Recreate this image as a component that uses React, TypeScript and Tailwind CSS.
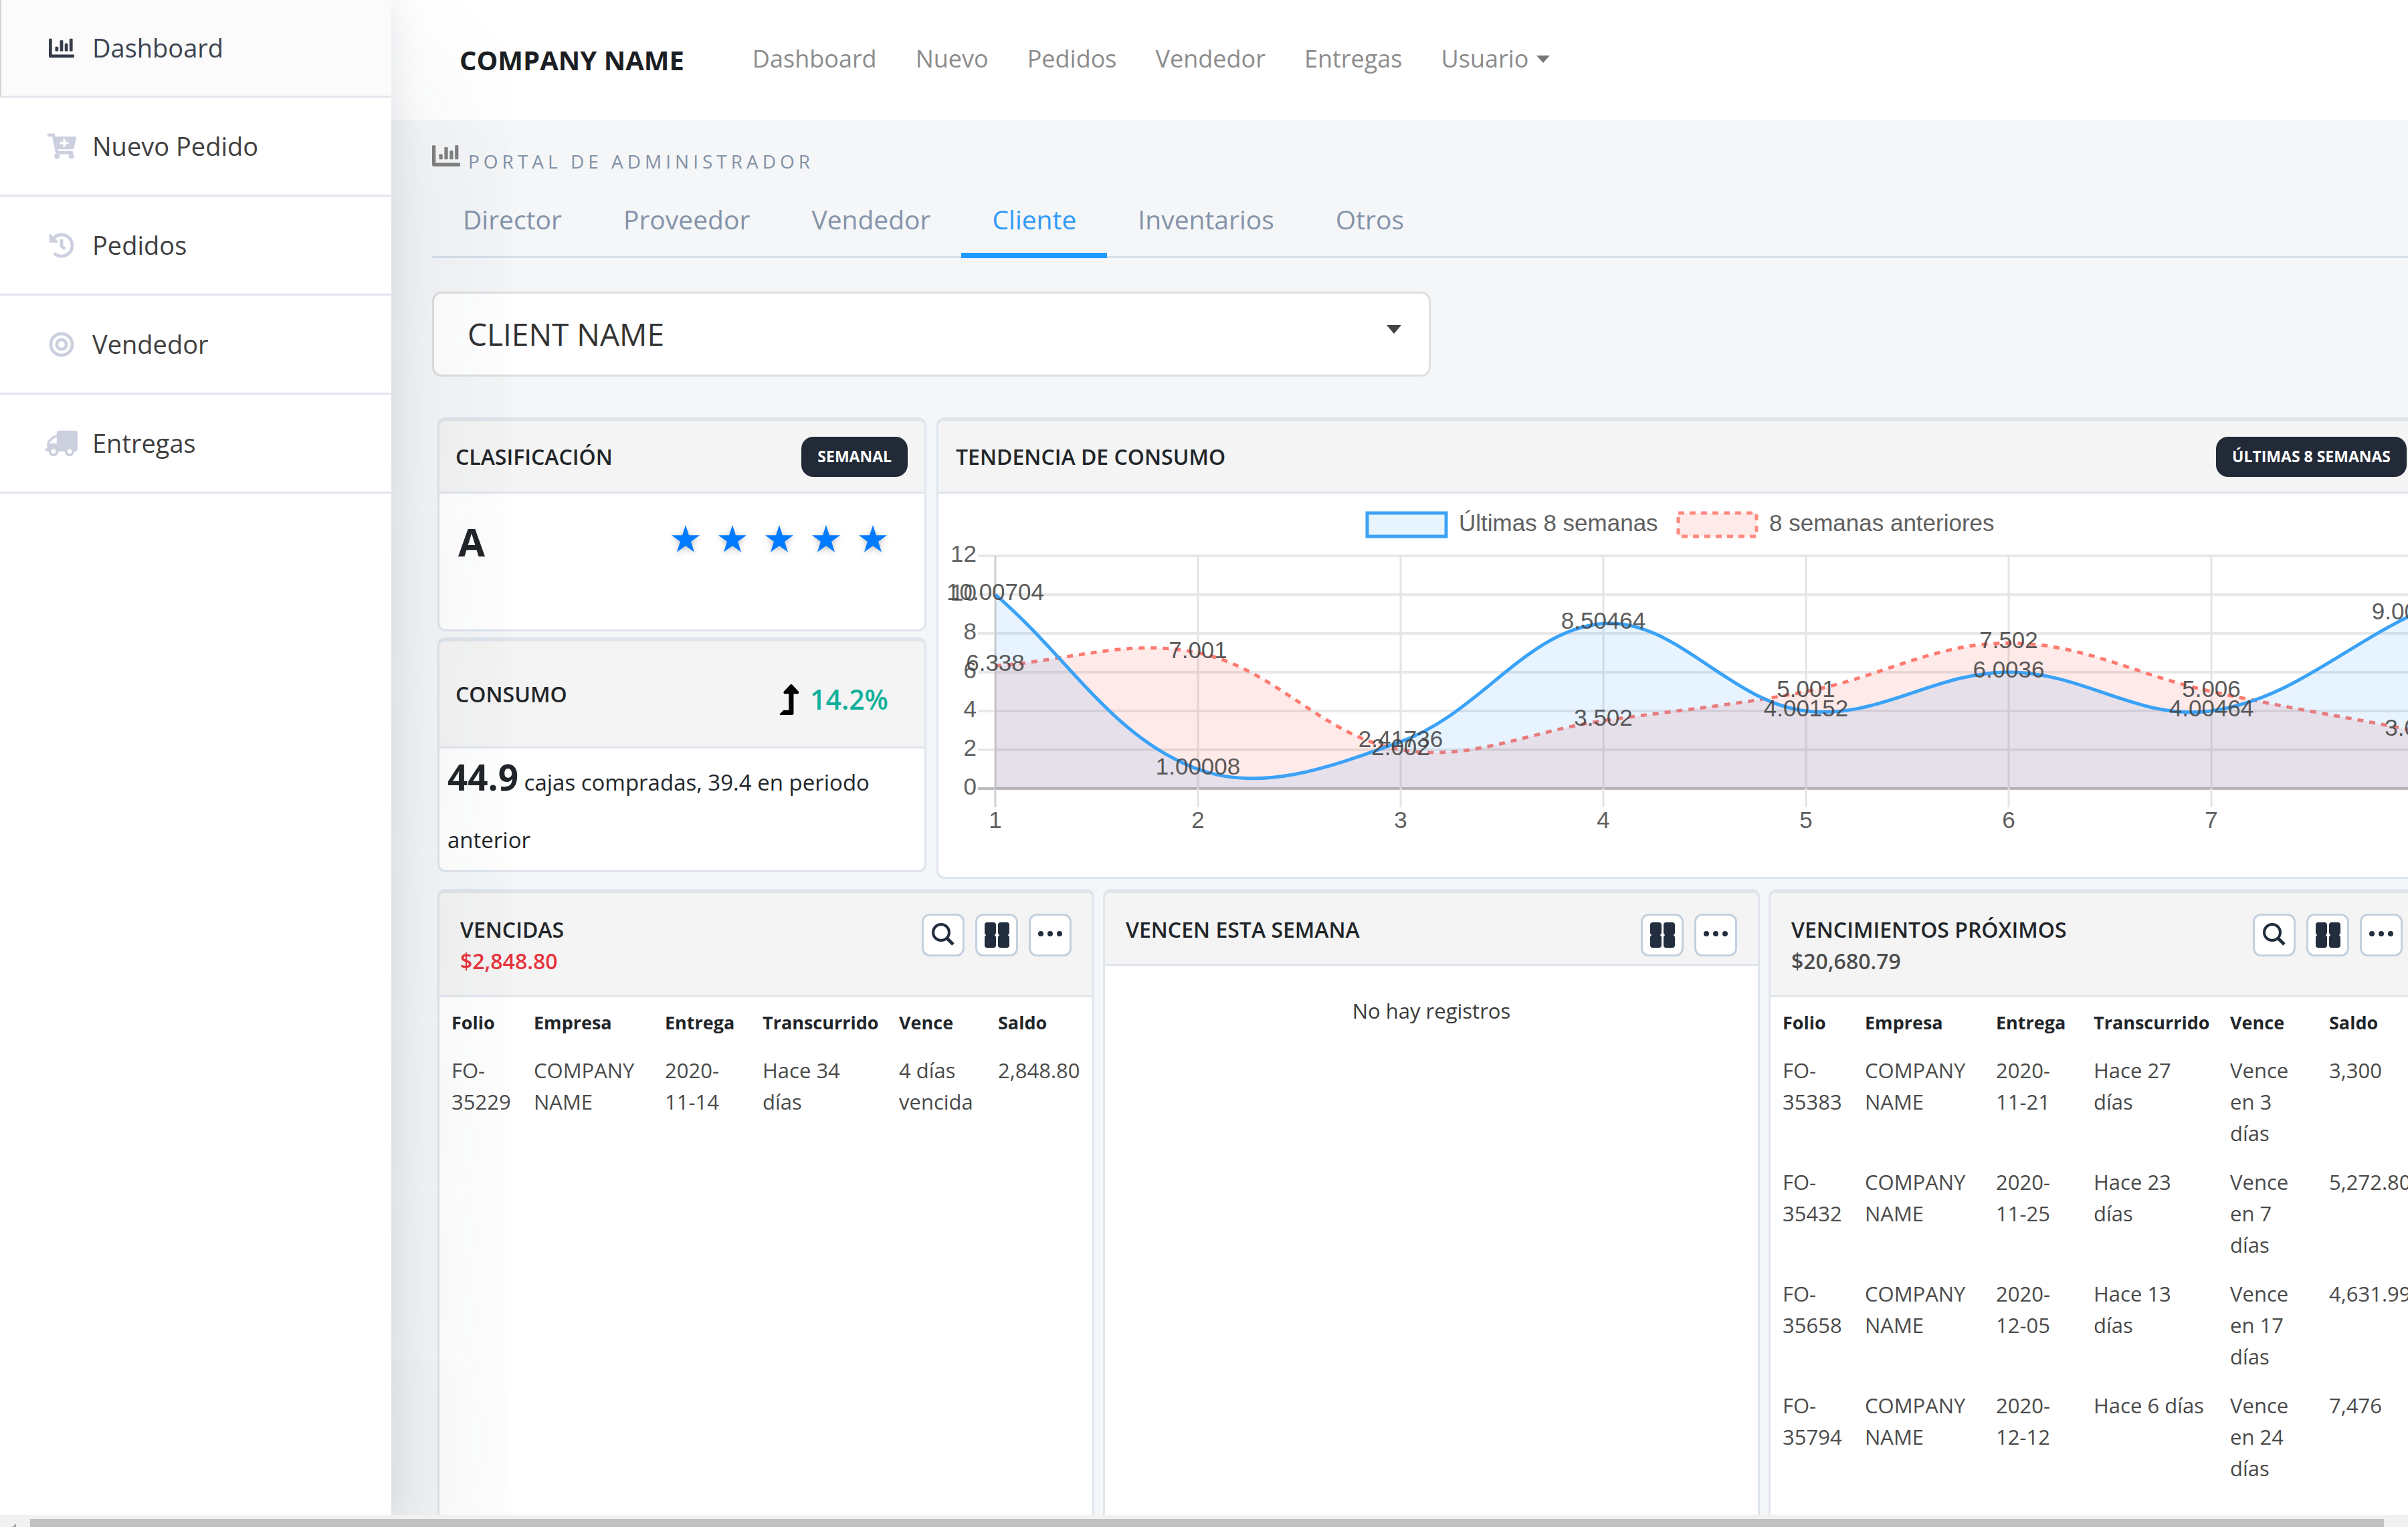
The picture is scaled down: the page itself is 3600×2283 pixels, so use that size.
import type { ReactNode } from "react";
import { FaBullseye, FaCartPlus, FaChartBar, FaHistory, FaLevelUpAlt, FaTruck } from "react-icons/fa";

const SIDE = [
  { label: "Dashboard", icon: <FaChartBar />, active: true },
  { label: "Nuevo Pedido", icon: <FaCartPlus className="size-[43px] shrink-0" /> },
  { label: "Pedidos", icon: <FaHistory /> },
  { label: "Vendedor", icon: <FaBullseye /> },
  { label: "Entregas", icon: <FaTruck className="size-12 shrink-0 -scale-x-100" /> },
];
const NAV = ["Dashboard", "Nuevo", "Pedidos", "Vendedor", "Entregas"];
const TABS = ["Director", "Proveedor", "Vendedor", "Cliente", "Inventarios", "Otros"];

type Row = { folio: string; date: string[]; ago: string; due: string; total: string };

const OVERDUE: Row[] = [
  { folio: "35229", date: ["2020-", "11-14"], ago: "Hace 34 días", due: "4 días vencida", total: "2,848.80" },
];
const UPCOMING: Row[] = [
  { folio: "35383", date: ["2020-", "11-21"], ago: "Hace 27 días", due: "Vence en 3 días", total: "3,300" },
  { folio: "35432", date: ["2020-", "11-25"], ago: "Hace 23 días", due: "Vence en 7 días", total: "5,272.80" },
  { folio: "35658", date: ["2020-", "12-05"], ago: "Hace 13 días", due: "Vence en 17 días", total: "4,631.99" },
  { folio: "35794", date: ["2020-", "12-12"], ago: "Hace 6 días", due: "Vence en 24 días", total: "7,476" },
];

const RECENT = ["10.00704", "1.00008", "2.41736", "8.50464", "4.00152", "6.0036", "4.00464", "9.00432"];
const PREVIOUS = ["6.338", "7.001", "2.002", "3.502", "5.001", "7.502", "5.006", "3.001"];

const X0 = 85;
const STEP = 303;
const BASE = 440;
const UNIT = 29;

type Pt = { x: number; y: number };

function points(values: string[]): Pt[] {
  return values.map((v, i) => ({ x: X0 + i * STEP, y: BASE - Number(v) * UNIT }));
}

// Smooth cubic path through the points
function curve(p: Pt[]): string {
  const t = 0.37;
  const ctrl = p.map((c, i) => {
    const a = p[i - 1] ?? c;
    const b = p[i + 1] ?? c;
    const d1 = Math.hypot(c.x - a.x, c.y - a.y);
    const d2 = Math.hypot(b.x - c.x, b.y - c.y);
    const f1 = (t * d1) / (d1 + d2);
    const f2 = (t * d2) / (d1 + d2);
    return {
      px: c.x - f1 * (b.x - a.x),
      py: c.y - f1 * (b.y - a.y),
      nx: c.x + f2 * (b.x - a.x),
      ny: c.y + f2 * (b.y - a.y),
    };
  });
  let d = `M${p[0].x},${p[0].y}`;
  for (let i = 1; i < p.length; i++) {
    d += ` C${ctrl[i - 1].nx},${ctrl[i - 1].ny} ${ctrl[i].px},${ctrl[i].py} ${p[i].x},${p[i].y}`;
  }
  return d;
}

function TrendChart() {
  const recent = points(RECENT);
  const previous = points(PREVIOUS);
  const end = X0 + 7 * STEP;
  const close = ` L${end},${BASE} L${X0},${BASE} Z`;
  return (
    <svg viewBox="0 0 2220 570" className="block w-full font-['Liberation_Sans',sans-serif] text-[35px]" role="img" aria-label="Tendencia de consumo">
      <rect x="641" y="28" width="118" height="35" fill="#e7f4fe" stroke="#3aa2f7" strokeWidth="5" />
      <text x="778" y="55" fill="#606060">Últimas 8 semanas</text>
      <rect x="1106" y="28" width="117" height="35" fill="#feeae9" stroke="#ff8a80" strokeWidth="5" strokeDasharray="9 8" />
      <text x="1242" y="55" fill="#606060">8 semanas anteriores</text>
      {[0, 2, 4, 6, 8, 10, 12].map((v) => (
        <g key={v}>
          <line x1="59" x2={end} y1={BASE - v * UNIT} y2={BASE - v * UNIT} stroke={v === 0 ? "#bdbdbd" : "#e8e8e8"} strokeWidth="4" />
          <text x="57" y={BASE - v * UNIT + 9} textAnchor="end" fill="#606060">{v}</text>
        </g>
      ))}
      {recent.map((p, i) => (
        <g key={i}>
          <line x1={p.x} x2={p.x} y1="92" y2="468" stroke={i === 0 ? "#d0d0d0" : "#e4e4e4"} strokeWidth="3" />
          <text x={p.x} y="499" textAnchor="middle" fill="#606060">{i + 1}</text>
        </g>
      ))}
      <path d={curve(previous) + close} fill="#f44336" fillOpacity="0.11" />
      <path d={curve(previous)} fill="none" stroke="#ff7a70" strokeWidth="5" strokeDasharray="9 9" />
      <path d={curve(recent) + close} fill="#2196f3" fillOpacity="0.11" />
      <path d={curve(recent)} fill="none" stroke="#3aa2f7" strokeWidth="5" />
      {recent.map((p, i) => (
        <text key={i} x={p.x} y={p.y + 8} textAnchor="middle" fill="#444" fillOpacity="0.9">{RECENT[i]}</text>
      ))}
      {previous.map((p, i) => (
        <text key={i} x={p.x} y={p.y + 8} textAnchor="middle" fill="#444" fillOpacity="0.9">{PREVIOUS[i]}</text>
      ))}
    </svg>
  );
}

function Card({ className = "", children }: { className?: string; children: ReactNode }) {
  return (
    <section className={`overflow-hidden rounded-[12px] border-[3px] border-t-[6px] border-[#dfe5eb] bg-white ${className}`}>
      {children}
    </section>
  );
}

function Badge({ children }: { children: ReactNode }) {
  return (
    <span className="flex h-[60px] items-center rounded-[18px] bg-[#222a37] px-6 text-[23px] font-bold text-white">{children}</span>
  );
}

function Tool({ label, children }: { label: string; children: ReactNode }) {
  return (
    <button type="button" aria-label={label} className="flex size-16 items-center justify-center rounded-[12px] border-[3px] border-[#c3d0de] bg-white text-[#222d3d]">
      {children}
    </button>
  );
}

function Tools({ search }: { search?: boolean }) {
  return (
    <div className="flex gap-4">
      {search && (
        <Tool label="Buscar">
          <svg viewBox="0 0 36 36" className="size-9" fill="none" stroke="currentColor" strokeWidth="4">
            <circle cx="15" cy="14" r="12" />
            <path d="M23.500 22.500 33 32" strokeWidth="5" />
          </svg>
        </Tool>
      )}
      <Tool label="Columnas">
        <svg viewBox="0 0 38 38" className="size-[38px]" fill="currentColor">
          <rect x="1" y="0" width="17" height="19" rx="4" />
          <rect x="21" y="0" width="17" height="19" rx="4" />
          <rect x="1" y="19" width="17" height="19" rx="4" />
          <rect x="21" y="19" width="17" height="19" rx="4" />
          <path d="M3 16h13v6H3zM23 16h13v6H23z" />
        </svg>
      </Tool>
      <Tool label="Más opciones">
        <svg viewBox="0 0 38 38" className="size-[38px]" fill="currentColor">
          <circle cx="5" cy="17" r="4" />
          <circle cx="19" cy="17" r="4" />
          <circle cx="33" cy="17" r="4" />
        </svg>
      </Tool>
    </div>
  );
}

function RecordTable({ rows }: { rows: Row[] }) {
  return (
    <table className="w-full table-fixed text-left text-[31px] leading-[47px] text-[#4a4a4a]">
      <colgroup>
        <col className="w-[141px]" />
        <col className="w-[196px]" />
        <col className="w-[146px]" />
        <col className="w-[204px]" />
        <col className="w-[148px]" />
        <col />
      </colgroup>
      <thead>
        <tr className="h-[75px] text-[27px] text-[#212529]">
          {["Folio", "Empresa", "Entrega", "Transcurrido", "Vence", "Saldo"].map((h) => (
            <th key={h} scope="col" className="font-bold first:pl-[18px]">{h}</th>
          ))}
        </tr>
      </thead>
      <tbody>
        {rows.map((r) => (
          <tr key={r.folio} className="align-top *:pt-[11px] *:pb-[15px]">
            <td className="pl-[18px]">FO-<br />{r.folio}</td>
            <td>COMPANY<br />NAME</td>
            <td>{r.date[0]}<br />{r.date[1]}</td>
            <td className="pr-7">{r.ago}</td>
            <td className="pr-8">{r.due}</td>
            <td>{r.total}</td>
          </tr>
        ))}
      </tbody>
    </table>
  );
}

function ListCard({ title, amount, amountClass = "", search, children }: { title: string; amount?: string; amountClass?: string; search?: boolean; children: ReactNode }) {
  return (
    <Card className="min-w-0 flex-1 rounded-b-none border-b-0">
      <header className={`flex items-start justify-between border-b-[3px] border-[#dfe5eb] bg-[#f4f4f4] px-[31px] pt-[31px] ${amount ? "h-[156px]" : "h-[109px]"}`}>
        <h2 className="text-[32px] leading-[47px] font-semibold text-[#212529]">
          {title}
          {amount && <span className={`block ${amountClass}`}>{amount}</span>}
        </h2>
        <Tools search={search} />
      </header>
      {children}
    </Card>
  );
}

export default function App() {
  return (
    <div className="flex h-screen flex-col overflow-hidden bg-[#f4f6f8] font-['Open_Sans','Noto_Sans',sans-serif] text-[#212529]">
      <div className="flex min-h-0 flex-1">
        <aside className="relative z-10 w-[585px] shrink-0 bg-white shadow-[0_0_50px_rgba(40,50,70,0.10),0_140px_360px_rgba(40,50,70,0.14)]">
          <nav aria-label="Lateral">
            {SIDE.map((s) => (
              <a
                key={s.label}
                href="#"
                className={`flex items-center gap-6 border-b-[3px] border-[#e1e6ec] text-[38px] ${s.active ? "h-[146px] border-l-2 border-l-[#d5d5d5] bg-[#fbfbfb] pl-[68px] text-[#3c4350]" : "h-[148px] pl-[70px] text-[#3f3f3f]"}`}
              >
                <span className={`flex w-11 justify-center text-[38px] ${s.active ? "text-[#343c49]" : "text-[#ccd0de]"}`}>{s.icon}</span>
                {s.label}
              </a>
            ))}
          </nav>
        </aside>
        <div className="flex min-w-0 flex-1 flex-col">
          <header className="flex h-[180px] shrink-0 items-center bg-white pl-[102px]">
            <a href="#" className="mr-[102px] text-[40px] font-bold text-[#1b1f24]">COMPANY NAME</a>
            <nav aria-label="Principal" className="flex gap-[58px] pb-1 text-[36px] text-[#8c8c8c]">
              {NAV.map((n) => (
                <a key={n} href="#">{n}</a>
              ))}
              <button type="button" className="flex items-center gap-3">
                Usuario
                <svg viewBox="0 0 20 11" className="h-[11px] w-5" fill="#777"><path d="M0 0h20L10 11z" /></svg>
              </button>
            </nav>
          </header>
          <main className="-mr-[26px] flex min-h-0 flex-1 flex-col pl-[61px]">
            <h1 className="flex h-[78px] items-end gap-3 text-[28px] leading-[34px] tracking-[6px] text-[#8391a5]">
              <FaChartBar className="mb-1 text-[42px] text-[#808080]" />
              PORTAL DE ADMINISTRADOR
            </h1>
            <div role="tablist" className="flex h-[128px] items-end border-b-[3px] border-[#d5dfe7] text-[39px] text-[#8593a8]">
              {TABS.map((t) => (
                <button
                  key={t}
                  type="button"
                  role="tab"
                  aria-selected={t === "Cliente"}
                  className={`-mb-[3px] h-[108px] border-b-8 px-[46px] ${t === "Cliente" ? "border-[#1f9bff] text-[#2f9bf8]" : "border-transparent"}`}
                >
                  {t}
                </button>
              ))}
            </div>
            <div className="relative mt-[50px] h-[127px] w-[1493px]">
              <select aria-label="Cliente" className="size-full appearance-none rounded-[14px] border-[3px] border-[#dedede] bg-white pl-[50px] text-[46px] text-[#333]">
                <option>CLIENT NAME</option>
              </select>
              <svg viewBox="0 0 22 13" className="pointer-events-none absolute top-[50px] right-[44px] h-[13px] w-[22px]" fill="#444"><path d="M0 0h22L11 13z" /></svg>
            </div>
            <div className="mt-[61px] flex min-h-0 flex-1 flex-col pl-2">
              <div className="flex gap-[15px]">
                <div className="flex w-[731px] shrink-0 flex-col gap-[9px]">
                  <Card className="h-[320px]">
                    <header className="flex h-[108px] items-center justify-between border-b-[3px] border-[#dfe5eb] bg-[#f4f4f4] pr-[25px] pl-6">
                      <h2 className="text-[32px] font-semibold">CLASIFICACIÓN</h2>
                      <Badge>SEMANAL</Badge>
                    </header>
                    <div className="flex justify-between pt-8 pr-[54px] pl-7">
                      <strong className="text-[58px] leading-[80px]">A</strong>
                      <div role="img" aria-label="5 estrellas" className="flex gap-6 pt-[13px]">
                        {[1, 2, 3, 4, 5].map((n) => (
                          <svg key={n} viewBox="0 0 24 24" className="size-[46px] drop-shadow-[0_2px_4px_rgba(0,0,0,0.25)]" fill="#007bff">
                            <path d="M12 1l2.6 8h8.4l-6.8 5 2.6 8.2L12 17.200l-6.800 5L7.800 14 1 9h8.400z" />
                          </svg>
                        ))}
                      </div>
                    </div>
                  </Card>
                  <Card className="h-[351px]">
                    <header className="flex h-[160px] items-center justify-between border-b-[3px] border-[#dfe5eb] bg-[#f4f4f4] pr-[54px] pl-6">
                      <h2 className="text-[32px] font-semibold">CONSUMO</h2>
                      <p className="flex items-center gap-2 pt-4 text-[41px] font-semibold text-[#12b09b]">
                        <FaLevelUpAlt className="text-[46px] text-black" />
                        14.2%
                      </p>
                    </header>
                    <p className="px-3 text-[33px] leading-[86px]">
                      <strong className="text-[53px]">44.9</strong> cajas compradas, 39.4 en periodo anterior
                    </p>
                  </Card>
                </div>
                <Card className="h-[690px] min-w-0 flex-1">
                  <header className="flex h-[108px] items-center justify-between border-b-[3px] border-[#dfe5eb] bg-[#f4f4f4] pr-[25px] pl-[26px]">
                    <h2 className="text-[32px] font-semibold">TENDENCIA DE CONSUMO</h2>
                    <Badge>ÚLTIMAS 8 SEMANAS</Badge>
                  </header>
                  <div className="pt-px">
                    <TrendChart />
                  </div>
                </Card>
              </div>
              <div className="mt-[15px] flex min-h-0 flex-1 gap-[13px]">
                <ListCard title="VENCIDAS" amount="$2,848.80" amountClass="text-[#e8333c]" search>
                  <RecordTable rows={OVERDUE} />
                </ListCard>
                <ListCard title="VENCEN ESTA SEMANA">
                  <p className="pt-11 text-center text-[31px] leading-[47px] text-[#3a3a3a]">No hay registros</p>
                </ListCard>
                <ListCard title="VENCIMIENTOS PRÓXIMOS" amount="$20,680.79" amountClass="text-[#4d4d4d]" search>
                  <RecordTable rows={UPCOMING} />
                </ListCard>
              </div>
            </div>
          </main>
        </div>
      </div>
      <div className="z-20 flex h-[18px] shrink-0 items-end bg-[#f1f1f1] pr-9" aria-hidden="true">
        <svg viewBox="0 0 45 6" className="h-[6px] w-[45px]" fill="#a3a3a3"><path d="M24 1v5h-6z" /></svg>
        <div className="h-3 flex-1 bg-[#c1c1c1]" />
      </div>
    </div>
  );
}
